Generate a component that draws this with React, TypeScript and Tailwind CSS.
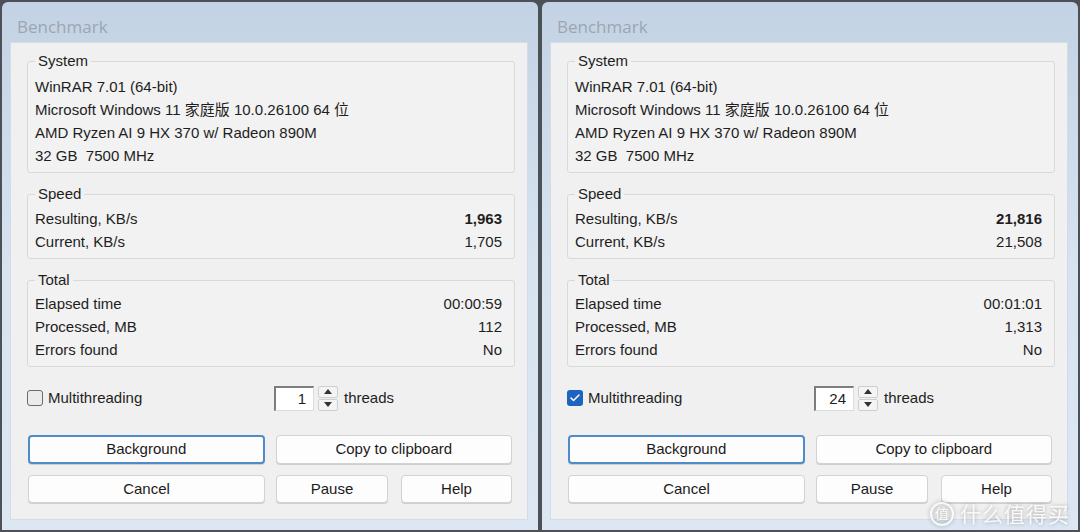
import { Check } from "lucide-react";

type Row = { label: string; value: string; bold?: boolean };

type BenchProps = {
  speed: Row[];
  total: Row[];
  threads: string;
  multi: boolean;
};

const systemLines = [
  "WinRAR 7.01 (64-bit)",
  "Microsoft Windows 11 家庭版 10.0.26100 64 位",
  "AMD Ryzen AI 9 HX 370 w/ Radeon 890M",
  "32 GB  7500 MHz",
];

function Group({ title, className, children }: { title: string; className?: string; children: React.ReactNode }) {
  return (
    <fieldset className={`border border-[#d9d9d9] rounded-[3px] bg-[#f2f2f2] pl-[7px] pr-[12px] pb-[5px] ${className ?? ""}`}>
      <legend className="px-[3px] leading-[16px] text-[#1e1e1e]">{title}</legend>
      {children}
    </fieldset>
  );
}

function WinButton({ label, focused, className }: { label: string; focused?: boolean; className?: string }) {
  return (
    <button
      className={`rounded-[4px] bg-[#fdfdfd] text-[15px] text-[#1b1b1b] shadow-[0_1px_0_#cfcfcf] ${
        focused ? "border-2 border-[#4f8bc8]" : "border border-[#d3d3d3]"
      } ${className ?? ""}`}
    >
      {label}
    </button>
  );
}

function Spinner({ value }: { value: string }) {
  return (
    <div className="flex items-center">
      <div className="w-[40px] h-[25px] bg-white border border-[#dcdcdc] border-t-[#7d7d7d] border-l-[#7d7d7d] border-t-2 border-l-2 text-right pr-[7px] leading-[21px] text-[#1e1e1e]">
        {value}
      </div>
      <div className="ml-[4px] w-[20px] h-[25px] flex flex-col gap-[1px]">
        <div className="flex-1 bg-[#f4f4f4] border border-[#cfcfcf] rounded-[2px] flex items-center justify-center">
          <svg width="8" height="5" viewBox="0 0 8 5">
            <path d="M0 5 L4 0 L8 5 Z" fill="#333" />
          </svg>
        </div>
        <div className="flex-1 bg-[#f4f4f4] border border-[#cfcfcf] rounded-[2px] flex items-center justify-center">
          <svg width="8" height="5" viewBox="0 0 8 5">
            <path d="M0 0 L8 0 L4 5 Z" fill="#333" />
          </svg>
        </div>
      </div>
    </div>
  );
}

function BenchWindow({ speed, total, threads, multi }: BenchProps) {
  return (
    <div className="w-[540px] h-[532px] border-2 border-[#4c5158] rounded-t-[8px] bg-gradient-to-b from-[#c3d2e4] via-[#d7e3ef] to-[#dce7f3] flex flex-col">
      {/* title bar */}
      <div className="h-[40px] pl-[15px] pt-[15px]">
        <div className="leading-[20px] text-[17px] text-[#9ca6b1] font-['Open_Sans',sans-serif]">Benchmark</div>
      </div>

      {/* client area */}
      <div className="ml-[8px] mr-[10px] h-[478px] bg-[#f0f0f0] border border-[#d3dde8] text-[15px] text-[#1e1e1e]">
        <div className="pl-[16px] pr-[12px]">
          <Group title="System" className="mt-[10px] pt-[6px]">
            {systemLines.map((line) => (
              <div key={line} className="h-[23px] leading-[23px] whitespace-pre">
                {line}
              </div>
            ))}
          </Group>

          <Group title="Speed" className="mt-[13px] pt-[5px]">
            {speed.map((r) => (
              <div key={r.label} className="h-[23px] leading-[23px] flex justify-between">
                <span>{r.label}</span>
                <span className={r.bold ? "font-bold" : ""}>{r.value}</span>
              </div>
            ))}
          </Group>

          <Group title="Total" className="mt-[13px] pt-[4px]">
            {total.map((r) => (
              <div key={r.label} className="h-[23px] leading-[23px] flex justify-between">
                <span>{r.label}</span>
                <span>{r.value}</span>
              </div>
            ))}
          </Group>
        </div>

        {/* threads row */}
        <div className="mt-[18px] pl-[16px] h-[26px] flex items-center">
          <div className="w-[247px] flex items-center">
            {multi ? (
              <div className="w-[16px] h-[16px] rounded-[3px] bg-[#1c64c0] flex items-center justify-center">
                <Check className="w-[12px] h-[12px] text-white" strokeWidth={3} />
              </div>
            ) : (
              <div className="w-[16px] h-[16px] rounded-[3px] border border-[#6a6a6a] bg-[#ebebeb]" />
            )}
            <span className="ml-[5px]">Multithreading</span>
          </div>
          <Spinner value={threads} />
          <span className="ml-[6px]">threads</span>
        </div>

        {/* buttons */}
        <div className="mt-[24px] pl-[17px] pr-[15px]">
          <div className="grid grid-cols-2 gap-[11px] h-[29px]">
            <WinButton label="Background" focused />
            <WinButton label="Copy to clipboard" />
          </div>
          <div className="mt-[11px] flex h-[28px]">
            <WinButton label="Cancel" className="w-[237px]" />
            <WinButton label="Pause" className="ml-[11px] w-[112px]" />
            <WinButton label="Help" className="ml-[13px] flex-1" />
          </div>
        </div>
      </div>
    </div>
  );
}

export default function App() {
  return (
    <div className="relative w-[1080px] h-[532px] flex overflow-hidden bg-[#4c5158] font-['Liberation_Sans','Noto_Sans_CJK_SC',sans-serif]">
      <BenchWindow
        speed={[
          { label: "Resulting, KB/s", value: "1,963", bold: true },
          { label: "Current, KB/s", value: "1,705" },
        ]}
        total={[
          { label: "Elapsed time", value: "00:00:59" },
          { label: "Processed, MB", value: "112" },
          { label: "Errors found", value: "No" },
        ]}
        threads="1"
        multi={false}
      />
      <BenchWindow
        speed={[
          { label: "Resulting, KB/s", value: "21,816", bold: true },
          { label: "Current, KB/s", value: "21,508" },
        ]}
        total={[
          { label: "Elapsed time", value: "00:01:01" },
          { label: "Processed, MB", value: "1,313" },
          { label: "Errors found", value: "No" },
        ]}
        threads="24"
        multi
      />

      {/* watermark */}
      <div className="absolute right-[10px] bottom-[6px] flex items-center gap-[6px] text-white/85 drop-shadow-[0_0_2px_rgba(0,0,0,0.35)]">
        <div className="w-[24px] h-[24px] rounded-full border-2 border-white/85 flex items-center justify-center text-[14px] leading-none">
          值
        </div>
        <span className="text-[21px] leading-none tracking-[1px]">什么值得买</span>
      </div>
    </div>
  );
}
